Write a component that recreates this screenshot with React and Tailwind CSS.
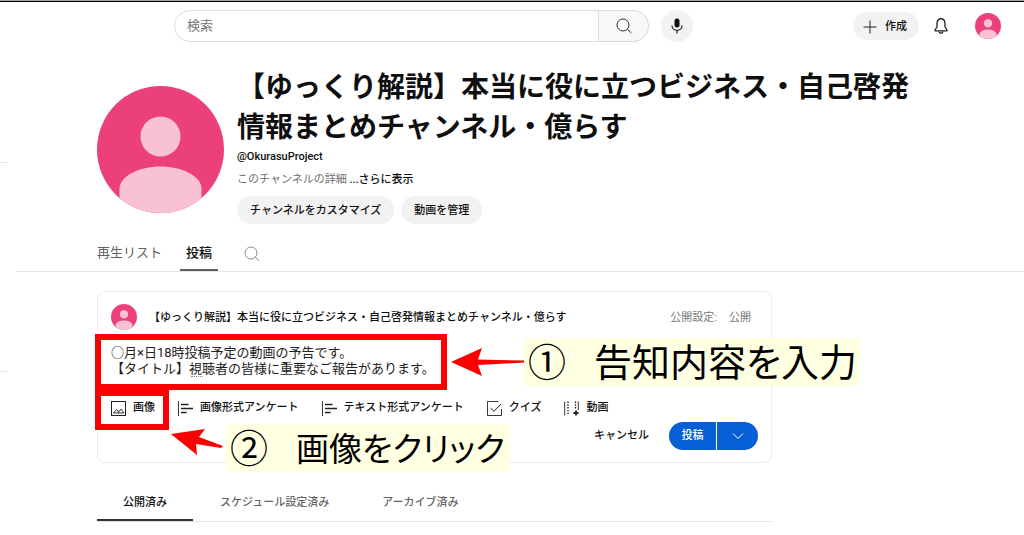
import React, { useState } from "react";

const actions = [
  { label: "画像", icon: "image" },
  { label: "画像形式アンケート", icon: "poll" },
  { label: "テキスト形式アンケート", icon: "poll" },
  { label: "クイズ", icon: "quiz" },
  { label: "動画", icon: "video" },
];

const listTabs = ["公開済み", "スケジュール設定済み", "アーカイブ済み"];

const Avatar = ({ className }) => (
  <svg viewBox="0 0 127 127" className={className} role="img" aria-label="アバター">
    <clipPath id="round">
      <circle cx="63.5" cy="63.5" r="63.5" />
    </clipPath>
    <g clipPath="url(#round)">
      <rect width="127" height="127" fill="#ec407a" />
      <circle cx="63.5" cy="50.5" r="20" fill="#f8c1d6" />
      <path d="M22.500 127V103C22.500 90 42 80.500 63.500 80.500S104.500 90 104.500 103V127Z" fill="#f8c1d6" />
    </g>
  </svg>
);

const SearchIcon = ({ className }) => (
  <svg viewBox="0 0 16 16" className={className} fill="none" stroke="currentColor">
    <circle cx="7" cy="7" r="6" />
    <path d="M11.300 11.300 15.300 15" />
  </svg>
);

const ActionIcon = ({ name }) => (
  <svg viewBox="0 0 15 15" className="size-[15px] shrink-0" fill="none" stroke="#222">
    {name === "image" && (
      <>
        <rect x="0.5" y="0.5" width="14" height="14" />
        <path d="M2.500 12 5.500 8.500 7.500 11 10 8 12.800 12ZM7 10.500 8 12" strokeWidth="0.9" />
      </>
    )}
    {name === "poll" && (
      <>
        <path d="M0.500 0V15" strokeWidth="0.9" />
        <path d="M3 3.500H10.500M3 7.500H15M3 11.500H8.500" strokeWidth="1.300" />
      </>
    )}
    {name === "quiz" && (
      <>
        <path d="M11.500 0.500H0.500V14.500H14.500V8" strokeWidth="0.9" />
        <path d="M3.500 7 7 10.300 14 3" />
      </>
    )}
    {name === "video" && (
      <>
        <path d="M0.700 0.500V14.500" strokeWidth="0.9" />
        <path d="M4 0.500V14.500M11.500 0.500V9" strokeWidth="1.400" strokeDasharray="1.400 1.400" />
        <path d="M14.300 0.500V9" strokeWidth="0.9" />
        <path d="M12 9.500V14.500M9.500 12H14.500" strokeWidth="1.800" />
      </>
    )}
  </svg>
);

const Header = () => (
  <header className="flex h-12 items-center pr-[23px] pl-[174px]">
    <form className="flex h-8 max-w-[475px] flex-1" onSubmit={(e) => e.preventDefault()}>
      <input
        type="text"
        aria-label="検索"
        placeholder="検索"
        className="min-w-0 flex-1 rounded-l-full border border-[#dcdcdc] pl-3 text-[13px] outline-none placeholder:text-[#777]"
      />
      <button
        type="submit"
        aria-label="検索を実行"
        className="flex w-[50px] items-center justify-center rounded-r-full border border-l-0 border-[#dcdcdc] bg-[#f8f8f8] text-[#333]"
      >
        <SearchIcon className="size-4" />
      </button>
    </form>
    <button aria-label="音声で検索" className="ml-3 flex size-8 shrink-0 items-center justify-center rounded-full bg-[#f2f2f2]">
      <svg viewBox="0 0 16 16" className="size-4" fill="none" stroke="#222">
        <rect x="5.500" y="0.500" width="5" height="9" rx="2.500" fill="#0f0f0f" stroke="none" />
        <path d="M3 7.500C3 14 13 14 13 7.500M8 12.500V15.500" strokeWidth="1.200" />
      </svg>
    </button>
    <div className="ml-auto flex items-center">
      <button className="flex h-7 items-center gap-2 rounded-full bg-[#f2f2f2] pt-0.5 pr-3 pl-2.5 text-[11px] font-medium">
        <svg viewBox="0 0 14 14" className="size-3.5" stroke="#222">
          <path d="M7 0.500V13.500M0.500 7H13.500" />
        </svg>
        作成
      </button>
      <button aria-label="通知" className="ml-3.5">
        <svg viewBox="0 0 16 18" className="h-[18px] w-4" fill="none" stroke="#222" strokeWidth="1.300">
          <path d="M8 1.500C5 2 4 4.500 4 6.500V10L2 13V13.800H14V13L12 10V6.500C12 4.500 11 2 8 1.500Z" strokeLinejoin="round" />
          <path d="M6 14.500C6.300 16.800 9.700 16.800 10 14.500" />
        </svg>
      </button>
      <button aria-label="アカウント" className="ml-[26px]">
        <Avatar className="size-[26px]" />
      </button>
    </div>
  </header>
);

const Channel = () => (
  <section className="flex gap-[13px] pl-[81px]">
    <Avatar className="mt-9 size-[127px] shrink-0" />
    <div className="max-w-[690px] pt-[18px]">
      <h1 className="text-[28px] leading-10 font-bold">
        【ゆっくり解説】本当に役に立つビジネス・自己啓発情報まとめチャンネル・億らす
      </h1>
      <p className="text-[11px] leading-[18px] font-medium">@OkurasuProject</p>
      <p className="text-[11px] leading-7 text-[#707070]">
        このチャンネルの詳細 <button className="font-medium text-[#0f0f0f]">...さらに表示</button>
      </p>
      <div className="mt-0.5 flex gap-[7px] text-[11px] font-medium">
        <button className="h-7 rounded-full bg-[#f2f2f2] px-[13px] pt-0.5">チャンネルをカスタマイズ</button>
        <button className="h-7 rounded-full bg-[#f2f2f2] px-[13px] pt-0.5">動画を管理</button>
      </div>
    </div>
  </section>
);

const Note = ({ number, children, className }) => (
  <div className={`absolute flex h-12 items-center bg-[#ffffe1] pt-0.5 pl-1 leading-none whitespace-nowrap text-black ${className}`}>
    <span className="text-[38px]">{number}</span>
    <span className="ml-7 [font-feature-settings:'palt']">{children}</span>
  </div>
);

const Composer = () => {
  const [text, setText] = useState("○月×日18時投稿予定の動画の予告です。\n【タイトル】視聴者の皆様に重要なご報告があります。");

  return (
    <section className="relative mt-[19px] ml-[81px] max-w-[675px] rounded-lg border border-[#ececec] px-[13px] pb-3">
      <div className="flex h-[50px] items-center text-[11px]">
        <Avatar className="size-[26px]" />
        <span className="ml-3 pt-0.5 font-medium">【ゆっくり解説】本当に役に立つビジネス・自己啓発情報まとめチャンネル・億らす</span>
        <span className="mr-[7px] ml-auto flex gap-3 pt-0.5 text-[#777]">
          <span>公開設定:</span>
          <span>公開</span>
        </span>
      </div>
      <textarea
        aria-label="投稿内容"
        value={text}
        onChange={(e) => setText(e.target.value)}
        spellCheck={false}
        className="mt-[3px] block h-12 w-full resize-none overflow-hidden text-[13px] leading-4 text-[#222] outline-none"
      />
      <div className="mt-[5px] flex h-5 items-center gap-[23px] text-[11px] font-medium">
        {actions.map((item) => (
          <button key={item.label} className="flex items-center gap-[7px]">
            <ActionIcon name={item.icon} />
            {item.label}
          </button>
        ))}
      </div>
      <div className="mt-1 flex h-7 items-center justify-end text-[11px] font-medium">
        <button>キャンセル</button>
        <button className="ml-5 h-7 w-12 rounded-l-full border-r border-white bg-[#065fd4] text-white">投稿</button>
        <button aria-label="その他の投稿オプション" className="flex h-7 w-[41px] items-center justify-center rounded-r-full bg-[#065fd4]">
          <svg viewBox="0 0 12 8" className="h-2 w-3" fill="none" stroke="#fff">
            <path d="M1 1.500 6 6.500 11 1.500" />
          </svg>
        </button>
      </div>

      <span className="absolute top-[84px] left-[93px] w-3 border-b border-dotted border-[#888]" />
      <div className="pointer-events-none absolute top-[42px] -left-[3px] h-14 w-[352px] border-[6px] border-[#fa0000]" />
      <div className="pointer-events-none absolute top-[98px] -left-[3px] h-10 w-[74px] border-[6px] border-[#fa0000]" />
      <svg viewBox="0 0 74 28" className="absolute top-[56px] left-[353px] h-7 w-[74px]" fill="#fa0000">
        <path d="M0 14 31 0 27 11.500 74 12.500V14.500L27 17 31 28Z" />
      </svg>
      <svg viewBox="0 0 52 28" className="absolute top-[136px] left-[73px] h-7 w-[52px]" fill="#fa0000">
        <path d="M0 6 34 1 28 9 52 18 50 20 25 16 26 27Z" />
      </svg>
      <Note number="①" className="top-[46px] left-[426px] w-[336px] text-[38px]">
        告知内容を入力
      </Note>
      <Note number="②" className="top-[132px] left-[128px] w-[284px] text-[33px]">
        画像をクリック
      </Note>
    </section>
  );
};

const App = () => {
  const [tab, setTab] = useState(listTabs[0]);

  return (
    <div className="min-h-screen bg-white font-[Roboto,'Noto_Sans_CJK_JP',sans-serif] text-[#0f0f0f]">
      <div className="h-0.5 border-t border-b border-t-[#a3a8a1] border-b-black" />
      <Header />
      <div className="flex">
        <aside className="w-4 shrink-0 pt-28">
          <hr className="w-2 border-[#e8e8e8]" />
          <hr className="mt-52 w-2 border-[#e8e8e8]" />
        </aside>
        <main className="min-w-0 flex-1">
          <Channel />
          <nav className="mt-3 flex h-9 items-stretch border-b border-[#e5e5e5] pl-[81px] text-[13px]">
            <a href="#playlists" className="mr-[18px] pt-[7px] text-[#606060]">再生リスト</a>
            <a href="#posts" className="border-b-2 border-[#606060] px-1.5 pt-[7px] font-medium">投稿</a>
            <button aria-label="チャンネル内を検索" className="ml-[26px] text-[#888]">
              <SearchIcon className="size-4" />
            </button>
          </nav>
          <Composer />
          <div className="mt-5 ml-[81px] flex h-[39px] max-w-[675px] gap-px border-b border-[#e5e5e5] text-[11px] font-medium">
            {listTabs.map((name) => (
              <button
                key={name}
                onClick={() => setTab(name)}
                className={tab === name ? "border-b-2 border-[#333] px-[26px] pt-1" : "px-[26px] pt-0.5 text-[#666]"}
              >
                {name}
              </button>
            ))}
          </div>
        </main>
      </div>
    </div>
  );
};

export default App;
